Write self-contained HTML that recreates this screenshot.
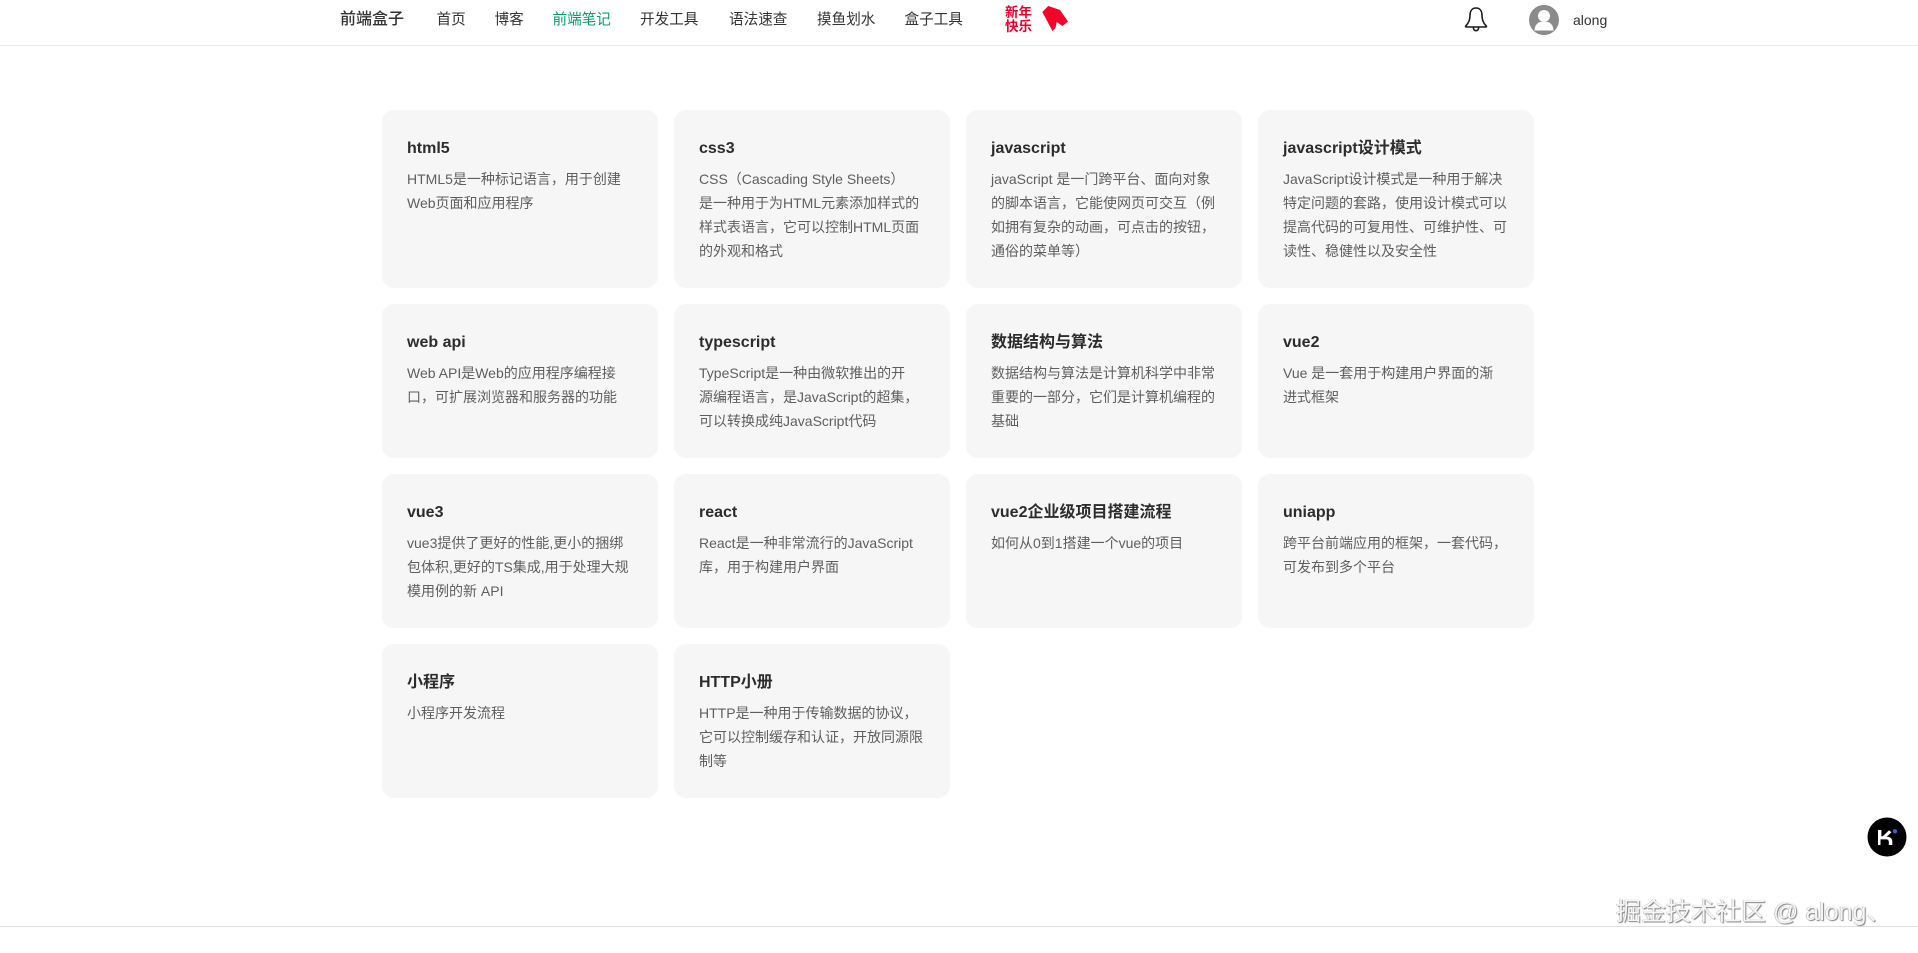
<!DOCTYPE html>
<html lang="zh-CN">
<head>
<meta charset="utf-8">
<title>前端盒子</title>
<style>
*{margin:0;padding:0;box-sizing:border-box}
html,body{width:1918px;height:953px;overflow:hidden;background:#fff;font-family:"Liberation Sans","Noto Sans CJK SC",sans-serif}
body{position:relative}
.abs{position:absolute;white-space:nowrap}
#nav{position:absolute;left:0;top:0;width:1918px;height:46px;border-bottom:1px solid #e8e8e8;background:#fff}
.n{position:absolute;top:8px;line-height:24px;font-size:14.6px;color:#333;white-space:nowrap;filter:blur(.25px)}
#grid{position:absolute;left:382px;top:110px;width:1152px;display:grid;grid-template-columns:repeat(4,276px);column-gap:16px;row-gap:16px;align-items:stretch}
.c{background:#f6f6f7;border-radius:12px;padding:25px;white-space:nowrap}
.c h3{font-size:16px;line-height:24px;font-weight:700;color:#2c2c2c;margin-bottom:8px;position:relative;top:1.5px;filter:blur(.25px)}
.c p{font-size:14px;line-height:24px;color:#5e5e5e;filter:blur(.25px)}
</style>
</head>
<body>
<div id="nav">
  <div class="n" style="left:340px;font-size:16px;color:#333;font-weight:500">前端盒子</div>
  <div class="n" style="left:436.500px">首页</div>
  <div class="n" style="left:494.500px">博客</div>
  <div class="n" style="left:552.500px;color:#0a9b6c">前端笔记</div>
  <div class="n" style="left:640px">开发工具</div>
  <div class="n" style="left:729px">语法速查</div>
  <div class="n" style="left:817px">摸鱼划水</div>
  <div class="n" style="left:904.500px">盒子工具</div>
  <div class="abs" style="left:1005px;top:6px;width:28px;font-size:13.500px;line-height:13.500px;font-weight:700;color:#e8002d;white-space:normal">新年<br>快乐</div>
  <svg class="abs" style="left:1035px;top:0" width="40" height="40" viewBox="0 0 40 40"><polygon points="13.300,6 7.300,12 17.500,31 20.500,28 21.700,22 27.500,26 33,21.500 25,10" fill="#f5002a"/></svg>
  <svg class="abs" style="left:1463px;top:5px" width="26" height="28" viewBox="0 0 26 28" fill="none" stroke="#1c1c1c" stroke-width="1.600" stroke-linejoin="round" stroke-linecap="round"><path d="M13 3C8.600 3 7 6.600 7 10.500c0 5-1.600 7.600-4.500 10.800 0 .5.300.7.800.7h19.400c.5 0 .8-.2.800-.7C20.600 18.100 19 15.500 19 10.500 19 6.600 17.400 3 13 3Z"/><path d="M10.300 22c0 2.300 1.200 3.700 2.700 3.700s2.700-1.400 2.700-3.700"/></svg>
  <svg class="abs" style="left:1529px;top:5px" width="30" height="30" viewBox="0 0 30 30"><circle cx="15" cy="15" r="15" fill="#8b8b8b"/><circle cx="15" cy="11" r="6" fill="#fff"/><path d="M5.500 25.500c0-5.500 3.500-8.500 6.500-8.500h6c3 0 6.500 3 6.500 8.500Z" fill="#fff"/></svg>
  <div class="n" style="left:1573px;font-size:14px;color:#333">along</div>
</div>

<div id="grid">
  <div class="c" style="height:178px"><h3>html5</h3><p>HTML5是一种标记语言，用于创建<br>Web页面和应用程序</p></div>
  <div class="c"><h3>css3</h3><p>CSS（Cascading Style Sheets）<br>是一种用于为HTML元素添加样式的<br>样式表语言，它可以控制HTML页面<br>的外观和格式</p></div>
  <div class="c"><h3>javascript</h3><p>javaScript 是一门跨平台、面向对象<br>的脚本语言，它能使网页可交互（例<br>如拥有复杂的动画，可点击的按钮，<br>通俗的菜单等）</p></div>
  <div class="c"><h3>javascript设计模式</h3><p>JavaScript设计模式是一种用于解决<br>特定问题的套路，使用设计模式可以<br>提高代码的可复用性、可维护性、可<br>读性、稳健性以及安全性</p></div>

  <div class="c" style="height:154px"><h3>web api</h3><p>Web API是Web的应用程序编程接<br>口，可扩展浏览器和服务器的功能</p></div>
  <div class="c"><h3>typescript</h3><p>TypeScript是一种由微软推出的开<br>源编程语言，是JavaScript的超集，<br>可以转换成纯JavaScript代码</p></div>
  <div class="c"><h3>数据结构与算法</h3><p>数据结构与算法是计算机科学中非常<br>重要的一部分，它们是计算机编程的<br>基础</p></div>
  <div class="c"><h3>vue2</h3><p>Vue 是一套用于构建用户界面的渐<br>进式框架</p></div>

  <div class="c" style="height:154px"><h3>vue3</h3><p>vue3提供了更好的性能,更小的捆绑<br>包体积,更好的TS集成,用于处理大规<br>模用例的新 API</p></div>
  <div class="c"><h3>react</h3><p>React是一种非常流行的JavaScript<br>库，用于构建用户界面</p></div>
  <div class="c"><h3>vue2企业级项目搭建流程</h3><p>如何从0到1搭建一个vue的项目</p></div>
  <div class="c"><h3>uniapp</h3><p>跨平台前端应用的框架，一套代码，<br>可发布到多个平台</p></div>

  <div class="c" style="height:154px"><h3>小程序</h3><p>小程序开发流程</p></div>
  <div class="c"><h3>HTTP小册</h3><p>HTTP是一种用于传输数据的协议，<br>它可以控制缓存和认证，开放同源限<br>制等</p></div>
</div>

<svg class="abs" style="left:1862px;top:812px" width="50" height="50" viewBox="0 0 50 50">
  <circle cx="25" cy="25" r="19.500" fill="#000"/>
  <path d="M16 18h3.400v6.200h1.400L27 18.300l2.400 2-4.700 4.500c3.500 0 5.600 1.700 5.600 4.700V33h-3.500v-3.200c0-1.500-1-2.400-2.800-2.400h-5.500V33H16Z" fill="#fff"/>
  <circle cx="33" cy="19.300" r="2.200" fill="#3f5be8"/>
</svg>

<div class="abs" style="left:0;top:926px;width:1918px;height:1px;background:#e0e0e0"></div>
<div class="abs" style="left:1616px;top:894px;font-size:25px;line-height:36px;color:#f6f6f6;text-shadow:1px 1px 1px #808080,-.5px 0 .5px #a8a8a8">掘金技术社区 @ along、</div>
</body>
</html>
